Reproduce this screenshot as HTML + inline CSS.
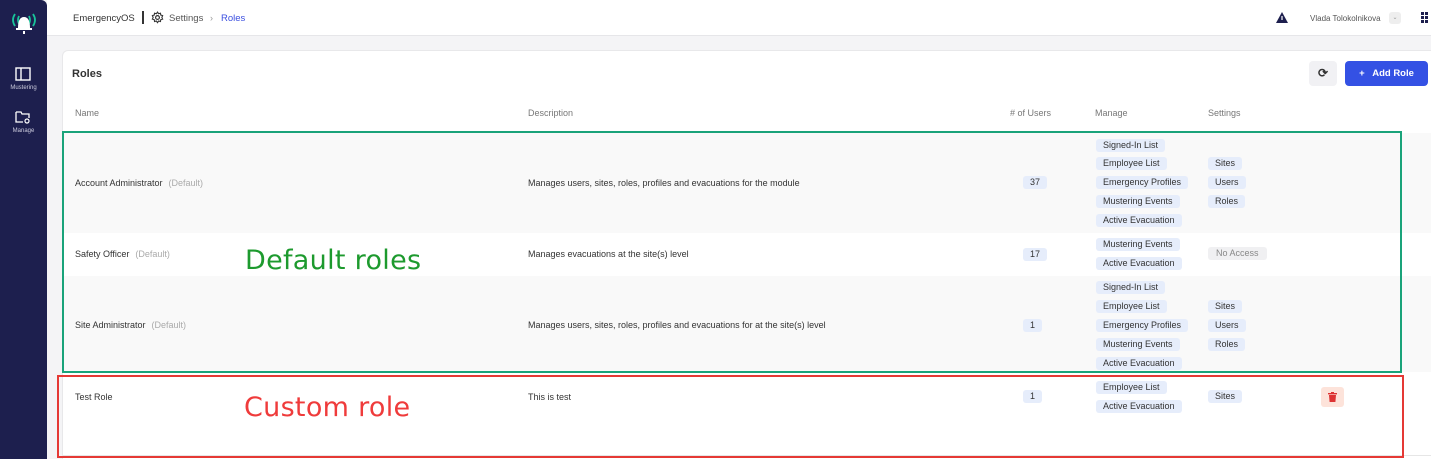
<!DOCTYPE html>
<html style="overflow:hidden;width:1431px;height:459px"><head><meta charset="utf-8"><style>
*{box-sizing:border-box;margin:0;padding:0}
body{width:1431px;height:459px;overflow:hidden;background:#f4f4f6;font-family:"Liberation Sans",Arial,sans-serif;position:relative;color:#333}
.a{position:absolute;white-space:nowrap}
.side{left:0;top:0;width:47px;height:459px;background:#1d1f4e;border-radius:0 6px 0 0}
.hdr{left:47px;top:0;width:1384px;height:36px;background:#fff;border-bottom:1px solid #e6e6e9}
.card{left:62px;top:50px;width:1380px;height:409px;background:#fff;border:1px solid #e8e8ea;border-bottom:none;border-radius:6px 6px 0 0}
.t{font-size:9px;color:#333}
.h{font-size:9px;color:#777}
.chip{position:absolute;background:#e6edfb;border-radius:3px;font-size:9px;color:#333;height:13px;line-height:13px;padding:0 7px;white-space:nowrap}
.d{color:#aaa;margin-left:6px}
</style></head><body>
<div class="a side"></div>
<svg class="a" style="left:10px;top:10px" width="28" height="26" viewBox="0 0 28 26"><path d="M5 4 Q1 10 5 16M9 6Q7 10 9 14M23 4Q27 10 23 16M19 6Q21 10 19 14" stroke="#19c39a" stroke-width="1.8" fill="none"/><path d="M8 18 Q8 7 14 7 Q20 7 20 18Z" fill="#fff"/><rect x="6" y="18" width="16" height="2" fill="#fff"/><rect x="13" y="21" width="2" height="3" fill="#fff"/></svg>
<svg class="a" style="left:15px;top:67px" width="16" height="14"><rect x="1" y="1" width="14" height="12" fill="none" stroke="#fff" stroke-width="1.4"/><line x1="6" y1="1" x2="6" y2="13" stroke="#fff" stroke-width="1.4"/></svg>
<div class="a" style="left:0;width:47px;top:85px;text-align:center;font-size:6px;color:#ccd">Mustering</div>
<svg class="a" style="left:15px;top:110px" width="16" height="14"><path d="M1 2h5l1 2h7v4M1 2v10h7" fill="none" stroke="#fff" stroke-width="1.3"/><circle cx="12" cy="11" r="2" fill="none" stroke="#fff" stroke-width="1.2"/></svg>
<div class="a" style="left:0;width:47px;top:128px;text-align:center;font-size:6px;color:#ccd">Manage</div>
<div class="a hdr"></div>
<div class="a" style="left:73px;top:13px;font-size:9.5px;color:#333">EmergencyOS</div>
<div class="a" style="left:142px;top:11px;width:2px;height:13px;background:#333"></div>
<svg class="a" style="left:151px;top:11px" width="13" height="13" viewBox="0 0 24 24"><circle cx="12" cy="12" r="3.5" fill="none" stroke="#333" stroke-width="2.2"/><path d="M12 2l2 3 3.5-1 .5 3.5 3.5 1-1.5 3.5 1.5 3-3.5 1-.5 3.5-3.5-1-2 3-2-3-3.5 1-.5-3.5-3.5-1 1.5-3L2.5 8.5l3.5-1L6.5 4 10 5z" fill="none" stroke="#333" stroke-width="2"/></svg>
<div class="a" style="left:169px;top:13px;font-size:9.5px;color:#555">Settings</div>
<div class="a" style="left:210px;top:13px;font-size:9px;color:#999">›</div>
<div class="a" style="left:221px;top:13px;font-size:9.5px;color:#3b4fe0">Roles</div>
<svg class="a" style="left:1276px;top:12px" width="12" height="11"><path d="M6 0L12 11H0Z" fill="#1d1f4e"/><rect x="5.4" y="4" width="1.2" height="4" fill="#fff"/></svg>
<div class="a" style="left:1310px;top:14px;font-size:8px;color:#555">Vlada Tolokolnikova</div>
<div class="a" style="left:1389px;top:12px;width:12px;height:12px;background:#eee;border-radius:3px;font-size:6px;color:#999;text-align:center;line-height:12px">⌄</div>
<svg class="a" style="left:1421px;top:12px" width="10" height="13"><g fill="#1d1f4e"><rect x="0" y="0" width="3" height="3"/><rect x="4" y="0" width="3" height="3"/><rect x="0" y="4" width="3" height="3"/><rect x="4" y="4" width="3" height="3"/><rect x="0" y="8" width="3" height="3"/><rect x="4" y="8" width="3" height="3"/></g></svg>
<div class="a card"></div>
<div class="a" style="left:72px;top:68px;font-size:11px;font-weight:bold;color:#333">Roles</div>
<div class="a" style="left:1309px;top:61px;width:28px;height:25px;background:#f1f1f4;border-radius:4px;text-align:center;line-height:25px;font-size:12px;font-weight:bold;color:#333">⟳</div>
<div class="a" style="left:1345px;top:61px;width:83px;height:25px;background:#3451e4;border-radius:4px;color:#fff;font-size:9.5px;font-weight:bold;line-height:25px;text-align:center">+&nbsp;&nbsp; Add Role</div>
<div class="a h" style="left:75px;top:108px">Name</div>
<div class="a h" style="left:528px;top:108px">Description</div>
<div class="a h" style="left:1010px;top:108px"># of Users</div>
<div class="a h" style="left:1095px;top:108px">Manage</div>
<div class="a h" style="left:1208px;top:108px">Settings</div>
<div class="a" style="left:63px;top:133px;width:1368px;height:100px;background:#f9f9f9"></div>
<div class="a" style="left:63px;top:276px;width:1368px;height:96px;background:#f9f9f9"></div>
<div class="a" style="left:63px;top:455px;width:1368px;height:1px;background:#e6e6e6"></div>
<div class="a t" style="left:75px;top:178px">Account Administrator<span class="d">(Default)</span></div>
<div class="a t" style="left:528px;top:178px">Manages users, sites, roles, profiles and evacuations for the module</div>
<div class="chip" style="left:1023px;top:176px">37</div>
<div class="chip" style="left:1096px;top:139px">Signed-In List</div>
<div class="chip" style="left:1096px;top:157px">Employee List</div>
<div class="chip" style="left:1096px;top:176px">Emergency Profiles</div>
<div class="chip" style="left:1096px;top:195px">Mustering Events</div>
<div class="chip" style="left:1096px;top:214px">Active Evacuation</div>
<div class="chip" style="left:1208px;top:157px">Sites</div>
<div class="chip" style="left:1208px;top:176px">Users</div>
<div class="chip" style="left:1208px;top:195px">Roles</div>
<div class="a t" style="left:75px;top:249px">Safety Officer<span class="d">(Default)</span></div>
<div class="a t" style="left:528px;top:249px">Manages evacuations at the site(s) level</div>
<div class="chip" style="left:1023px;top:248px">17</div>
<div class="chip" style="left:1096px;top:238px">Mustering Events</div>
<div class="chip" style="left:1096px;top:257px">Active Evacuation</div>
<div class="chip" style="left:1208px;top:247px;background:#f0f0f2;color:#888;padding:0 8px">No Access</div>
<div class="a t" style="left:75px;top:320px">Site Administrator<span class="d">(Default)</span></div>
<div class="a t" style="left:528px;top:320px">Manages users, sites, roles, profiles and evacuations for at the site(s) level</div>
<div class="chip" style="left:1023px;top:319px">1</div>
<div class="chip" style="left:1096px;top:281px">Signed-In List</div>
<div class="chip" style="left:1096px;top:300px">Employee List</div>
<div class="chip" style="left:1096px;top:319px">Emergency Profiles</div>
<div class="chip" style="left:1096px;top:338px">Mustering Events</div>
<div class="chip" style="left:1096px;top:357px">Active Evacuation</div>
<div class="chip" style="left:1208px;top:300px">Sites</div>
<div class="chip" style="left:1208px;top:319px">Users</div>
<div class="chip" style="left:1208px;top:338px">Roles</div>
<div class="a t" style="left:75px;top:392px">Test Role</div>
<div class="a t" style="left:528px;top:392px">This is test</div>
<div class="chip" style="left:1023px;top:390px">1</div>
<div class="chip" style="left:1096px;top:381px">Employee List</div>
<div class="chip" style="left:1096px;top:400px">Active Evacuation</div>
<div class="chip" style="left:1208px;top:390px">Sites</div>
<div class="a" style="left:1321px;top:387px;width:23px;height:20px;background:#fde3da;border-radius:3px"></div>
<svg class="a" style="left:1328px;top:392px" width="9" height="10"><rect x="0" y="1" width="9" height="1.4" fill="#d33"/><rect x="3" y="0" width="3" height="1.2" fill="#d33"/><path d="M1 3h7l-.6 7H1.6z" fill="#d33"/></svg>
<div class="a" style="left:62px;top:131px;width:1340px;height:242px;border:2px solid #1aa37a"></div>
<div class="a" style="left:57px;top:375px;width:1347px;height:83px;border:2px solid #e53935"></div>
<div class="a" style="left:245px;top:245px;font-family:'DejaVu Sans',sans-serif;font-size:27px;color:#1d9a2e;letter-spacing:0.3px">Default roles</div>
<div class="a" style="left:244px;top:392px;font-family:'DejaVu Sans',sans-serif;font-size:27px;color:#ef3b3b;letter-spacing:0.3px">Custom role</div>
</body></html>
